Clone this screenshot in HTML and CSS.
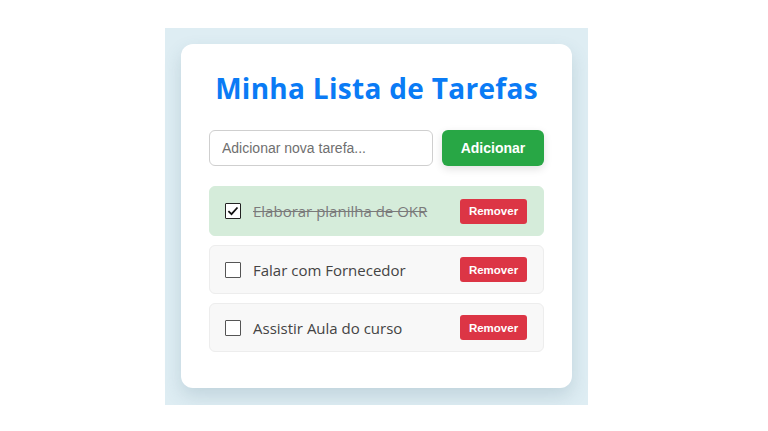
FILE: index.html
```html
<!DOCTYPE html>
<html lang="pt-BR">
<head>
<meta charset="utf-8">
<title>Minha Lista de Tarefas</title>
<link rel="stylesheet" href="styles.css">
</head>
<body>
<div class="panel">
  <div class="card">
    <h1 class="title">Minha Lista de Tarefas</h1>
    <div class="add-row">
      <input class="task-input" type="text" placeholder="Adicionar nova tarefa...">
      <button class="add-btn">Adicionar</button>
    </div>
    <ul class="list">
      <li class="item done">
        <span class="box checked"><svg viewBox="0 0 16 16" width="16" height="16"><path d="M3.4 8.2 L6.5 11.1 L12.5 4.5" fill="none" stroke="#111" stroke-width="1.8"/></svg></span>
        <span class="text">Elaborar planilha de OKR</span>
        <button class="remove-btn">Remover</button>
      </li>
      <li class="item">
        <span class="box"></span>
        <span class="text">Falar com Fornecedor</span>
        <button class="remove-btn">Remover</button>
      </li>
      <li class="item">
        <span class="box"></span>
        <span class="text">Assistir Aula do curso</span>
        <button class="remove-btn">Remover</button>
      </li>
    </ul>
  </div>
</div>
</body>
</html>
```
FILE: styles.css
```css
html, body {
  margin: 0;
  padding: 0;
  background: #ffffff;
}
body {
  padding: 28px 0 0 165px;
  font-family: "Open Sans", "Liberation Sans", sans-serif;
}
.panel {
  width: 423px;
  height: 377px;
  box-sizing: border-box;
  padding: 16px;
  background: #deedf3;
}
.card {
  width: 391px;
  height: 344px;
  box-sizing: border-box;
  background: #ffffff;
  border-radius: 12px;
  padding: 27px 28px 28px;
  box-shadow: 0 8px 18px rgba(60, 100, 120, 0.18);
}
.title {
  margin: 0;
  text-align: center;
  font-family: "Open Sans", sans-serif;
  font-weight: 700;
  font-size: 28px;
  letter-spacing: 0.3px;
  line-height: 34px;
  color: #0a7bf5;
}
.add-row {
  display: flex;
  gap: 9px;
  margin-top: 25px;
}
.task-input {
  flex: 1;
  height: 36px;
  box-sizing: border-box;
  border: 1px solid #cfcfcf;
  border-radius: 6px;
  padding: 0 12px;
  font-family: "Liberation Sans", Arial, sans-serif;
  font-size: 14px;
  color: #333;
  outline: none;
}
.task-input::placeholder {
  color: #6f6f6f;
}
.add-btn {
  width: 102px;
  height: 36px;
  border: none;
  border-radius: 6px;
  background: #28a745;
  color: #ffffff;
  font-family: "Liberation Sans", Arial, sans-serif;
  font-weight: 700;
  font-size: 14px;
  box-shadow: 0 3px 8px rgba(0, 0, 0, 0.12);
}
.list {
  list-style: none;
  margin: 20px 0 0;
  padding: 0;
  display: flex;
  flex-direction: column;
  gap: 9px;
}
.item {
  display: flex;
  align-items: center;
  height: 49px;
  box-sizing: border-box;
  padding: 0 16px 0 15px;
  background: #f8f8f8;
  border: 1px solid #ededed;
  border-radius: 6px;
}
.item.done {
  height: 50px;
  background: #d5ecda;
  border-color: #d5ecda;
}
.box {
  width: 16px;
  height: 16px;
  box-sizing: border-box;
  border: 1.5px solid #555;
  background: #fff;
  border-radius: 1px;
  margin-right: 12px;
  display: flex;
  align-items: center;
  justify-content: center;
  flex: none;
}
.box.checked {
  border-color: #222;
}
.box svg {
  display: block;
  flex: none;
}
.text {
  flex: 1;
  font-family: "Open Sans", sans-serif;
  font-size: 15px;
  color: #444;
}
.done .text {
  color: #7a7a7a;
  text-decoration: line-through;
}
.remove-btn {
  width: 67px;
  height: 25px;
  border: none;
  border-radius: 3px;
  background: #dc3545;
  color: #ffffff;
  font-family: "Liberation Sans", Arial, sans-serif;
  font-weight: 700;
  font-size: 11.5px;
}
```
